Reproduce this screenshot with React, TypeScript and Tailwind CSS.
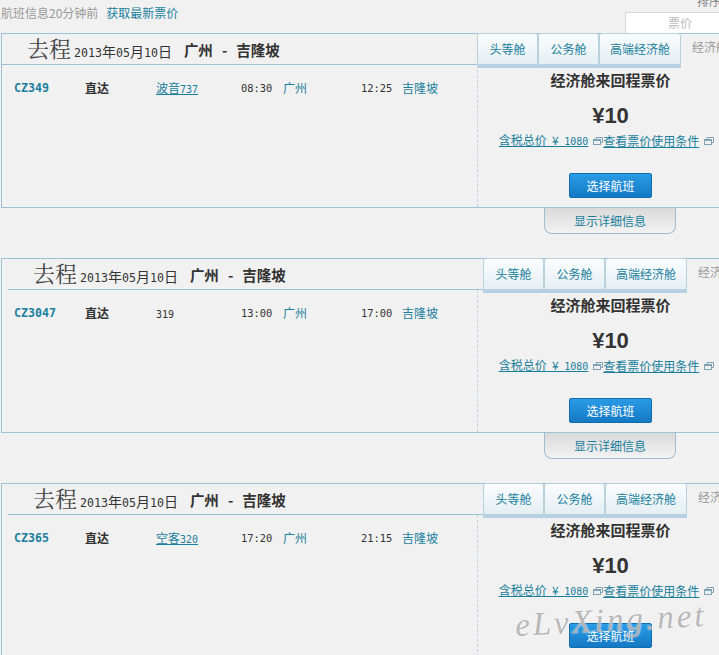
const cjk = { fontFamily: '"Noto Sans CJK SC", "Liberation Sans", sans-serif' }

const flights = [
  { no: 'CZ349', planeName: '波音', planeNo: '737', dep: '08:30', arr: '12:25', shift: false },
  { no: 'CZ3047', planeName: '', planeNo: '319', dep: '13:00', arr: '17:00', shift: true },
  { no: 'CZ365', planeName: '空客', planeNo: '320', dep: '17:20', arr: '21:15', shift: true },
]

const WindowIcon = () => (
  <svg width="10" height="9" viewBox="0 0 10 9" className="ml-[5px] shrink-0" fill="none" stroke="#7fa3b5">
    <path d="M3 2.5V0.5H9.5V5.5H7.5" />
    <rect x="0.5" y="2.5" width="7" height="5" />
    <path d="M1 3.5H7" />
  </svg>
)

const Digits = ({ children }: { children: string }) => (
  <span className="font-['DejaVu_Sans_Mono'] text-[11.6px]">{children}</span>
)

const Small = ({ children }: { children: string }) => (
  <span className="font-['DejaVu_Sans_Mono'] text-[10px]">{children}</span>
)

const Tab = ({ label, width }: { label: string; width: string }) => (
  <div
    className={`${width} h-[32px] -mt-px flex items-center justify-center rounded-t-[3px] border border-[#b9d0dd] bg-gradient-to-b from-[#fbfdfe] to-[#e4eef3] text-[12px] text-[#1a7f9c] shadow-[0_3px_0_#b4d0e2]`}
  >
    {label}
  </div>
)

const FlightCard = ({ flight }: { flight: (typeof flights)[number] }) => (
  <div className="mb-[24px]">
    <div className="w-[760px] h-[175px] ml-px border border-[#9cc2d8] border-r-0 flex flex-col">
      <div className={`flex h-[31px] shrink-0 ${flight.shift ? 'ml-[6px]' : ''}`}>
        <div className="w-[475px] h-[31px] border-b border-[#9cc2d8] pl-[25px] flex items-baseline text-[#333]">
          <span className="text-[22px] leading-[28px] text-[#444] font-['Noto_Serif_CJK_SC','Noto_Sans_CJK_SC']">去程</span>
          <span className="ml-[3px] text-[14px]">
            <Digits>2013</Digits>年<Digits>05</Digits>月<Digits>10</Digits>日
          </span>
          <span className="ml-[12px] -translate-y-px text-[14.5px] font-bold whitespace-pre">
            广州<span className="mx-[9px]">-</span>吉隆坡
          </span>
        </div>
        <Tab label="头等舱" width="w-[61px]" />
        <Tab label="公务舱" width="w-[61px]" />
        <Tab label="高端经济舱" width="w-[82px]" />
        <span className="ml-[11px] mt-[4px] text-[12px] text-[#999]">经济舱</span>
      </div>
      <div className="flex flex-1 min-h-0">
        <div className="w-[475px] pl-[12px] pt-[15px] flex items-start text-[12px] leading-[16px] text-[#333]">
          <span className="w-[71px] font-['DejaVu_Sans_Mono'] text-[11.6px] font-bold text-[#1a7f9c]">{flight.no}</span>
          <span className="w-[71px] font-bold">直达</span>
          <span className={`w-[85px] ${flight.planeName ? 'text-[#1a7f9c]' : ''}`}>
            <span className={flight.planeName ? 'underline' : ''}>
              {flight.planeName}
              <Small>{flight.planeNo}</Small>
            </span>
          </span>
          <span className="w-[42px] font-['DejaVu_Sans_Mono'] text-[10.4px]">{flight.dep}</span>
          <span className="w-[78px] text-[#1a7f9c]">广州</span>
          <span className="w-[41px] font-['DejaVu_Sans_Mono'] text-[10.4px]">{flight.arr}</span>
          <span className="text-[#1a7f9c]">吉隆坡</span>
        </div>
        <div className="w-[266px] border-l border-dashed border-[#c4d4dc] flex flex-col items-center pt-[5px]">
          <div className="text-[15px] leading-[20px] font-bold text-[#333]">经济舱来回程票价</div>
          <div className="mt-[13px] text-[22px] leading-[26px] font-bold text-[#333] font-['Liberation_Sans']">¥10</div>
          <div className="mt-[3px] flex items-center text-[12px] leading-[16px] text-[#1a7f9c] -translate-x-[4px]">
            <span className="underline whitespace-pre">
              含税总价  ¥  <Small>1080</Small>
            </span>
            <WindowIcon />
            <span className="underline">查看票价使用条件</span>
            <WindowIcon />
          </div>
          <button className="mt-[23px] w-[83px] h-[25px] rounded-[2px] border border-[#0f6fae] bg-gradient-to-b from-[#2a9be6] to-[#1479c4] text-[12px] text-white">
            选择航班
          </button>
        </div>
      </div>
    </div>
    <div className="ml-[544px] w-[132px] h-[26px] flex items-center justify-center rounded-b-[8px] border border-t-0 border-[#9cbdd4] bg-gradient-to-b from-[#d9d9d9] to-[#f3f3f3] text-[12px] text-[#1a7f9c]">
      显示详细信息
    </div>
  </div>
)

export default function App() {
  return (
    <div className="relative w-[719px] h-[655px] overflow-hidden bg-[#f1f1f1]" style={cjk}>
      <div className="h-[33px] flex justify-between">
        <div className="pl-px pt-[5px] text-[12px] leading-[16px] text-[#999]">
          航班信息20分钟前
          <span className="ml-[8px] text-[#1a7f9c]">获取最新票价</span>
        </div>
        <div className="w-[94px] relative">
          <div className="absolute left-[72px] -top-[7px] text-[12px] leading-[16px] text-[#888] whitespace-nowrap">排序</div>
          <div className="absolute top-[12px] left-0 w-[94px] h-[21px] bg-white border border-[#cfd8dc] border-r-0 border-b-0 pl-[42px] text-[12px] leading-[20px] text-[#bbb]">
            票价
          </div>
        </div>
      </div>
      {flights.map((flight) => (
        <FlightCard key={flight.no} flight={flight} />
      ))}
      <div className="absolute left-[515px] top-[596px] -rotate-3 text-[33px] italic tracking-[3px] text-[#a5a5a5]/80 font-['Liberation_Serif'] whitespace-nowrap [text-shadow:0_0_2px_#ffffff]">
        eLvXing.net
      </div>
    </div>
  )
}
